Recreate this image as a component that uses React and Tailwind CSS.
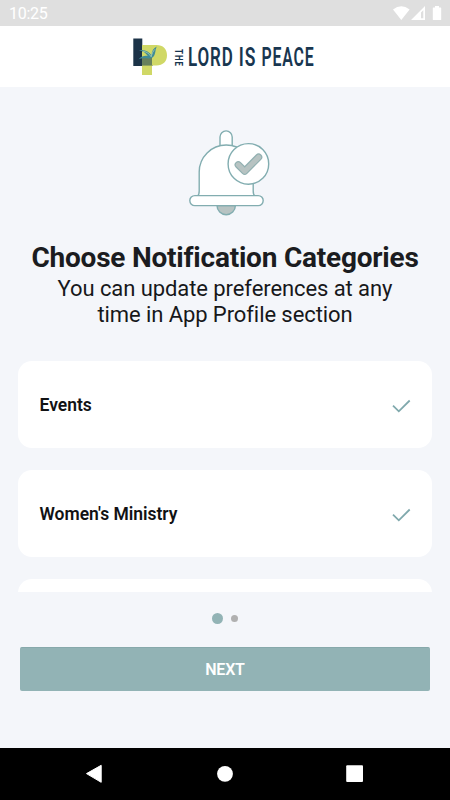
function StatusBar() {
  return (
    <div className="flex h-[26px] shrink-0 items-center justify-between bg-[#dfdfdf] pl-[9px] pr-[8px] text-white">
      <span className="pt-[2px] text-[16px] leading-[24px] tracking-[-0.3px]">10:25</span>
      <svg className="h-[26px] w-[50px]" viewBox="392 0 50 26" fill="currentColor">
        <path d="M393 9.4Q401.3 3.2 409.6 9.4L401.3 20Z" />
        <path fillRule="evenodd" d="M425 6V20H411ZM423.3 10.2L421 12.5V18.3H423.3Z" />
        <path d="M435 6h4v1.4h1.6q.6 0 .6.6v11.4q0 .6-.6.6h-7.2q-.6 0-.6-.6V8q0-.6.6-.6H435Z" />
      </svg>
    </div>
  );
}

function Logo() {
  return (
    <svg className="h-[40px] w-[188px]" viewBox="132 36 188 40" role="img" aria-label="The Lord Is Peace">
      <path d="M133.3 38.4H142.3V57H152.5V66H133.3Z" fill="#1c3348" />
      <path d="M142 45H156.5C163 45 167 49 167 55.2S163 65.4 156.5 65.4H152V75H142Z" fill="#d0d866" />
      <path d="M142 57.5H152V65.6H142Z" fill="#67805c" />
      <path d="M139 50.3C144.5 49 149 51.5 151.5 55.2C151.8 51 153.5 48 156.8 46.5C155 49.5 156 55 152.5 57.6C148.5 60 143.5 57 138.7 59.3C141.5 55.8 145 55.6 147.8 56C146 53 143 51 139 50.3Z" fill="#3f8b96" />
      <path d="M143 51.2C147 51.8 149.5 54 151.2 56.8C152 53.5 153 51 155 49.3" fill="none" stroke="#a9cfb8" strokeWidth=".8" />
      <g fill="#183650" fontFamily="Roboto, sans-serif">
        <text transform="translate(175.4 48.9) rotate(90) scale(.75 1)" fontSize="10.5" fontWeight="700" letterSpacing="1.5">THE</text>
        <g fontSize="25" fontWeight="600" letterSpacing="1.3">
          <text transform="translate(188 66.2) scale(.678 1)">LORD</text>
          <text transform="translate(238.7 66.2) scale(.7 1)">IS</text>
          <text transform="translate(261.5 66.2) scale(.635 1)">PEACE</text>
        </g>
      </g>
    </svg>
  );
}

function BellIcon() {
  return (
    <svg className="h-[88px] w-[84px]" viewBox="188 129 84 88" fill="#fff" stroke="#82adb0" strokeWidth="1.4">
      <path d="M217 205.5a9.2 9.2 0 0 0 18.4 0Z" fill="#b7c3c2" />
      <path d="M220 146.5V137a6.1 6.1 0 0 1 12.2 0V146.5Z" />
      <path d="M197.5 196C199 195 199.2 194 199.2 191V172A27 27 0 0 1 253.2 172V191C253.2 194 253.5 195 255 196Z" />
      <rect x="189.8" y="195.6" width="73.4" height="10" rx="5" />
      <circle cx="248.4" cy="163.9" r="20.3" />
      <path d="M238.3 164.8L244.7 171.2L258.6 157.2" fill="none" stroke="#91b0b1" strokeWidth="7.4" strokeLinecap="round" strokeLinejoin="round" />
      <path d="M238.3 164.8L244.7 171.2L258.6 157.2" fill="none" stroke="#b7c3c2" strokeWidth="5" strokeLinecap="round" strokeLinejoin="round" />
    </svg>
  );
}

function CategoryCard({ label }) {
  return (
    <div className="flex h-[87px] shrink-0 items-center justify-between rounded-[14px] bg-white pl-[21.5px] pr-[21px]">
      <span className="pt-[2px] text-[17.5px] font-semibold tracking-[-0.02px] text-[#111214]">{label}</span>
      {label && (
        <svg className="mt-[4px] h-[14px] w-[19px]" viewBox="0 0 19 14" fill="none" stroke="#80a9ad" strokeWidth="1.8">
          <path d="M1 6.7L6.8 12.3L17.7 1.5" />
        </svg>
      )}
    </div>
  );
}

export default function App() {
  return (
    <div className="flex h-[800px] w-[450px] flex-col overflow-hidden bg-[#f4f6fa] font-['Roboto',sans-serif]">
      <StatusBar />
      <header className="flex h-[61px] shrink-0 bg-white pt-[10px] pl-[132px]">
        <Logo />
      </header>
      <main className="flex min-h-0 flex-1 flex-col">
        <div className="flex justify-center pt-[42px] pl-[10px]">
          <BellIcon />
        </div>
        <h1 className="mt-[25px] text-center text-[28px] leading-[32px] font-bold tracking-[-0.22px] whitespace-nowrap text-[#1b1c20]">Choose Notification Categories</h1>
        <p className="mt-[2px] text-center text-[22px] leading-[26px] tracking-[-0.08px] text-[#17181a]">
          You can update preferences at any
          <br />
          time in App Profile section
        </p>
        <div className="mt-[32.5px] flex h-[231.5px] shrink-0 flex-col gap-[22.2px] overflow-hidden px-[18px]">
          <CategoryCard label="Events" />
          <CategoryCard label="Women's Ministry" />
          <CategoryCard />
        </div>
        <div className="mt-[20px] flex h-[13px] items-center justify-center gap-[8px] pr-px">
          <span className="size-[11px] rounded-full bg-[#92b3b5]" />
          <span className="size-[7px] rounded-full bg-[#b0b0b0]" />
        </div>
        <button className="mx-[20px] mt-[22px] h-[43.5px] rounded-[2px] border-t border-[#87a9ab] bg-[#92b3b5] pt-px text-[16px] font-semibold tracking-[-0.2px] text-white">NEXT</button>
      </main>
      <nav className="h-[52px] shrink-0 bg-black">
        <svg className="h-[52px] w-[450px]" viewBox="0 748 450 52" fill="#fff">
          <path d="M86.5 773.6L101.2 765.3V782.3Z" stroke="#fff" strokeWidth="1" strokeLinejoin="round" />
          <circle cx="225" cy="773.8" r="7.9" />
          <rect x="346.2" y="765.3" width="16.8" height="16.7" rx="1" />
        </svg>
      </nav>
    </div>
  );
}
